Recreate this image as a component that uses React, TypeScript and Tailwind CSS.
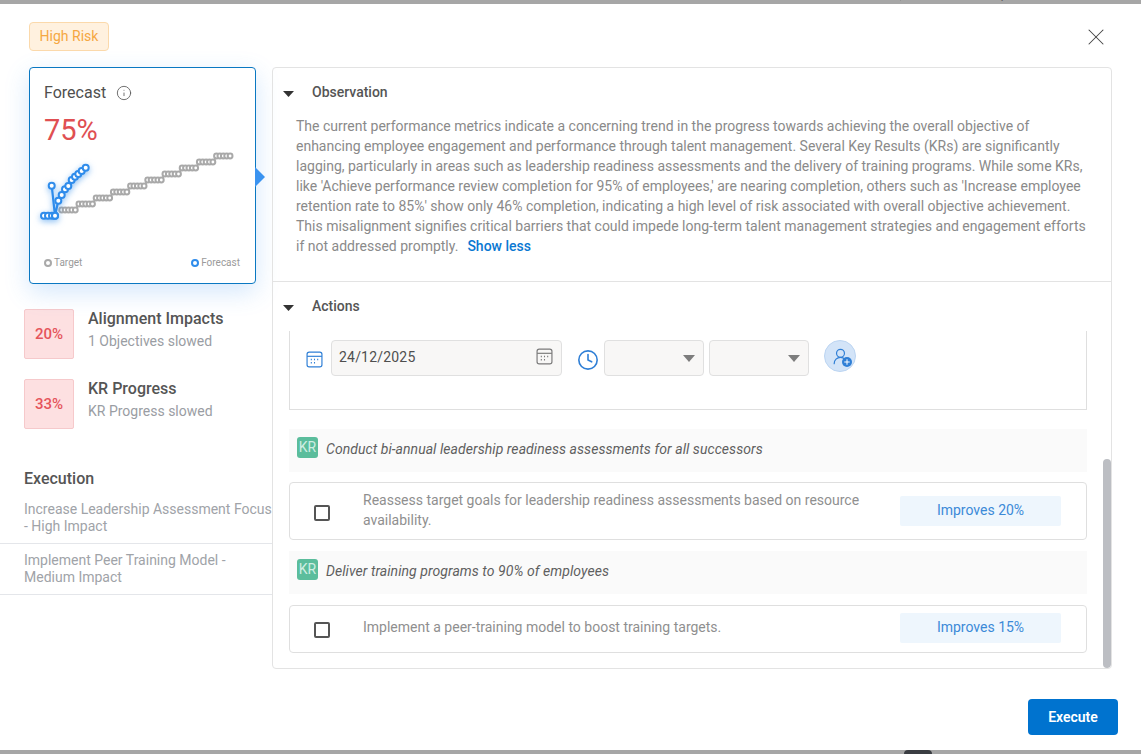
import { X, Info, Clock, UserRound, Plus, Search, Triangle } from 'lucide-react';

const greyPoints: [number, number][] = [];
for (let k = 0; k < 10; k++) {
  for (let i = 0; i < 5; i++) {
    greyPoints.push([75.3 + 17.2 * k - (4 - i) * 3.4, 210 - 6 * k]);
  }
}

const bluePoints: [number, number][] = [
  [44, 215.7], [48, 215.7], [52, 215.7], [55, 215.7], [51.7, 185.7], [55, 215.7],
  [58.3, 200.7], [61.7, 195], [65, 189.3], [68.3, 186], [71.7, 180], [75, 176.7],
  [78.3, 174], [81.7, 171], [85.7, 167.7],
];

function toPath(points: [number, number][]) {
  return points.map((p, i) => `${i === 0 ? 'M' : 'L'}${p[0]} ${p[1]}`).join(' ');
}

function Caret() {
  return (
    <svg width="11" height="6" viewBox="0 0 11 6" className="mt-[3px] shrink-0">
      <path d="M0 0H11L5.5 6Z" fill="#333333" />
    </svg>
  );
}

function CalendarGlyph({ color, size }: { color: string; size: number }) {
  return (
    <svg width={size} height={size} viewBox="0 0 16 16" fill="none" className="shrink-0">
      <rect x="1" y="1" width="14" height="14" rx="2" stroke={color} strokeWidth="1.1" />
      <path d="M1 5H15" stroke={color} strokeWidth="1.1" />
      <path d="M4.5 8H5.5M7.5 8H8.5M10.5 8H11.5M4.5 11H5.5M7.5 11H8.5" stroke={color} strokeWidth="1.3" />
    </svg>
  );
}

function SelectBox() {
  return (
    <div className="w-[100px] h-[36px] bg-[#f8f7f6] border border-[#e0e0e0] rounded flex items-center justify-end pr-[8px]">
      <svg width="12" height="7" viewBox="0 0 12 7" className="mt-[1px]">
        <path d="M0 0H12L6 7Z" fill="#7d7d7d" />
      </svg>
    </div>
  );
}

function KrRow({ text }: { text: string }) {
  return (
    <div className="flex items-center h-[43px] bg-[#fafafa] pl-2 pb-[3px]">
      <span className="w-[21px] h-[21px] mb-1 rounded-[3px] bg-[#5bbd9c] text-[#cfeee3] text-[14px] flex items-center justify-center">KR</span>
      <span className="ml-2 text-[14px] italic tracking-[0.06px] text-[#5f5f5f]">{text}</span>
    </div>
  );
}

function ActionRow({ text, impact, tall }: { text: string; impact: string; tall?: boolean }) {
  return (
    <div className={`flex items-center border border-[#dfdfdf] rounded pl-6 pr-[25px] ${tall ? 'h-[58px]' : 'h-[48px]'}`}>
      <span className={`w-[16px] h-[16px] border-2 border-[#555555] rounded-[2px] shrink-0 ${tall ? 'mt-[3px]' : 'mt-[2px]'}`} />
      <span className={`ml-[33px] flex-1 pr-6 text-[14px] leading-[20px] text-[#8f8f8f] ${tall ? 'pb-[2px]' : 'pb-[4px]'}`}>{text}</span>
      <span className={`w-[161px] h-[30px] shrink-0 bg-[#eef6fd] rounded-[2px] text-[14px] text-[#3c8ad8] flex items-center justify-center ${tall ? 'mb-[1px]' : 'mb-[3px]'}`}>{impact}</span>
    </div>
  );
}

function ImpactItem({ pct, title, sub }: { pct: string; title: string; sub: string }) {
  return (
    <div className="flex">
      <div className="w-[50px] h-[50px] bg-[#fde0e1] border border-[#f6c9cb] rounded-[2px] text-[#e5545b] text-[15px] font-medium flex items-center justify-center">{pct}</div>
      <div className="ml-[14px] -mt-[2px]">
        <div className="text-[16px] leading-[24px] font-medium text-[#555555]">{title}</div>
        <div className="text-[14px] leading-[20px] text-[#9a9da3]">{sub}</div>
      </div>
    </div>
  );
}

export default function App() {
  return (
    <div className="w-[1141px] h-[754px] overflow-hidden flex flex-col bg-[#a6a6a6] font-['Roboto',sans-serif]">
      {/* the page behind the dialog only shows as a sliver */}
      <div className="h-1 shrink-0 overflow-hidden flex items-end pl-[886px] text-[14px] text-[#666666]">
        <div className="flex items-center gap-[11px] shrink-0">
          <Search size={16} strokeWidth={1.5} />
          <span>Search and explore</span>
        </div>
      </div>
      <div className="flex-1 bg-white flex flex-col min-h-0">
        <div className="flex items-center justify-between h-[63px] pl-[29px] pr-[32px] shrink-0">
          <span className="h-[29px] w-[80px] mt-[2px] rounded bg-[#fff1df] border border-[#fbd9ab] text-[#f5a742] text-[14px] flex items-center justify-center">High Risk</span>
          <X size={28} strokeWidth={0.9} className="text-[#444444] mt-[2px] -mr-[1px]" />
        </div>

        <div className="flex h-[602px] shrink-0">
          <div className="w-[272px] shrink-0 flex flex-col">
            <div className="relative ml-[29px] w-[227px] h-[217px] border border-[#0a78c2] rounded bg-white shadow-[0_8px_24px_rgba(58,147,240,0.22)] pl-[14px] pt-[15px] flex flex-col">
              <div className="flex items-center text-[16px] leading-[20px] text-[#4f4f4f]">
                Forecast
                <Info size={16} strokeWidth={1.25} className="ml-[10px] text-[#555555]" />
              </div>
              <div className="text-[29px] leading-[32px] mt-[11px] text-[#e04f52]">75%</div>
              <svg width="196" height="80" viewBox="44 150 196 80" className="mt-[4px] overflow-visible">
                <path d={toPath(greyPoints)} fill="none" stroke="#a9a9a9" strokeWidth="2" />
                {greyPoints.map((p, i) => (
                  <circle key={i} cx={p[0]} cy={p[1]} r="2.4" fill="#ffffff" stroke="#a9a9a9" strokeWidth="2" />
                ))}
                <g className="drop-shadow-[0_2px_3px_rgba(47,140,235,0.55)]">
                  <path d={toPath(bluePoints)} fill="none" stroke="#2f8ceb" strokeWidth="2.2" />
                  {bluePoints.map((p, i) => (
                    <circle key={i} cx={p[0]} cy={p[1]} r="3" fill="#ffffff" stroke="#2f8ceb" strokeWidth="2" />
                  ))}
                </g>
              </svg>
              <div className="flex items-center justify-between pr-[15px] mt-[27px] text-[10px] leading-[12px] text-[#9a9a9a]">
                <span className="flex items-center gap-[2px]">
                  <span className="w-[8px] h-[8px] rounded-full border-2 border-[#a9a9a9]" />
                  Target
                </span>
                <span className="flex items-center gap-[2px]">
                  <span className="w-[8px] h-[8px] rounded-full border-2 border-[#2f8ceb]" />
                  Forecast
                </span>
              </div>
              <svg width="10" height="20" viewBox="0 0 10 20" className="absolute top-[99px] -right-[10px]">
                <path d="M0 0L10 10L0 20Z" fill="#3a93f0" />
              </svg>
            </div>

            <div className="mt-[25px] ml-6 flex flex-col gap-5">
              <ImpactItem pct="20%" title="Alignment Impacts" sub="1 Objectives slowed" />
              <ImpactItem pct="33%" title="KR Progress" sub="KR Progress slowed" />
            </div>

            <div className="mt-[38px] pl-6 text-[16px] leading-[24px] font-medium text-[#555555]">Execution</div>
            <div className="mt-[10px] pl-6 pb-[8px] border-b border-[#e4e6ea] text-[14px] leading-[17px] text-[#a0a3a8]">
              Increase Leadership Assessment Focus - High Impact
            </div>
            <div className="pt-[8px] pl-6 pr-[30px] pb-[8px] border-b border-[#e4e6ea] text-[14px] leading-[17px] text-[#a0a3a8]">
              Implement Peer Training Model - Medium Impact
            </div>
          </div>

          <div className="relative w-[840px] h-[602px] border border-[#e3e3e3] rounded flex flex-col overflow-hidden">
            <div className="flex items-center h-[48px] pl-[10px] shrink-0">
              <Caret />
              <span className="ml-[18px] text-[14px] font-medium text-[#555555]">Observation</span>
            </div>
            <div className="pl-[23px] pr-[24px] h-[166px] shrink-0 border-b border-[#e3e3e3] text-[14px] leading-[20px] text-[#8a8a8a]">
              The current performance metrics indicate a concerning trend in the progress towards achieving the overall objective of enhancing employee engagement and performance through talent management. Several Key Results (KRs) are significantly lagging, particularly in areas such as leadership readiness assessments and the delivery of training programs. While some KRs, like 'Achieve performance review completion for 95% of employees,' are nearing completion, others such as 'Increase employee retention rate to 85%' show only 46% completion, indicating a high level of risk associated with overall objective achievement. This misalignment signifies critical barriers that could impede long-term talent management strategies and engagement efforts if not addressed promptly.
              <span className="inline-block ml-[9px] font-medium text-[#0a78d2]">Show less</span>
            </div>
            <div className="flex items-center h-[49px] pl-[10px] shrink-0">
              <Caret />
              <span className="ml-[18px] text-[14px] font-medium text-[#555555]">Actions</span>
            </div>

            <div className="flex-1 pl-4 pr-6 min-h-0">
              <div className="h-[79px] border border-t-0 border-[#dfdfdf] pl-[16px] pt-[9px] flex items-start">
                <div className="mt-[11px]"><CalendarGlyph color="#2f7fd6" size={17} /></div>
                <div className="ml-[8px] w-[231px] h-[36px] bg-[#f8f7f6] border border-[#e0e0e0] rounded flex items-center justify-between pl-[7px] pr-[8px]">
                  <span className="text-[14px] text-[#4f4f4f] tracking-[0.2px] -mt-[2px]">24/12/2025</span>
                  <div className="-mt-[3px]"><CalendarGlyph color="#7a7a7a" size={17} /></div>
                </div>
                <Clock size={22} strokeWidth={1.75} className="ml-[15px] mt-[9px] text-[#2f7fd6] shrink-0" />
                <div className="ml-[5px]"><SelectBox /></div>
                <div className="ml-[5px]"><SelectBox /></div>
                <div className="relative ml-[15px] w-[32px] h-[32px] rounded-full bg-[#d3e4f8] border border-[#bcd5f2] flex items-center justify-center">
                  <UserRound size={19} strokeWidth={1.5} className="text-[#2f7fd6]" />
                  <span className="absolute right-[3px] bottom-[4px] w-[10px] h-[10px] rounded-full bg-[#2f7fd6] flex items-center justify-center">
                    <Plus size={8} strokeWidth={3} className="text-white" />
                  </span>
                </div>
              </div>
              <div className="mt-[19px]"><KrRow text="Conduct bi-annual leadership readiness assessments for all successors" /></div>
              <div className="mt-[10px]">
                <ActionRow tall impact="Improves 20%" text="Reassess target goals for leadership readiness assessments based on resource availability." />
              </div>
              <div className="mt-[11px]"><KrRow text="Deliver training programs to 90% of employees" /></div>
              <div className="mt-[11px]">
                <ActionRow impact="Improves 15%" text="Implement a peer-training model to boost training targets." />
              </div>
            </div>
            <div className="absolute right-0 bottom-0 w-2 h-[209px] rounded-full bg-[#bcbec3]" />
          </div>
        </div>

        <div className="flex justify-end pr-[23px] mt-[30px]">
          <span className="w-[90px] h-[36px] rounded bg-[#0073cf] text-white text-[14px] font-semibold flex items-center justify-center">Execute</span>
        </div>
      </div>
      <div className="h-1 shrink-0 overflow-hidden flex items-start pl-[648px] text-[14px] font-medium">
        <div className="flex items-center gap-[8px] shrink-0 text-[#a33a3a]">
          <span>11%</span>
          <Triangle size={10} fill="currentColor" strokeWidth={0} className="rotate-180" />
        </div>
        <span className="ml-[212px] w-[28px] h-4 rounded-[4px] bg-[#3a3d42] shrink-0" />
        <span className="ml-[70px] text-[#5a5a5a] shrink-0">2025</span>
      </div>
    </div>
  );
}
